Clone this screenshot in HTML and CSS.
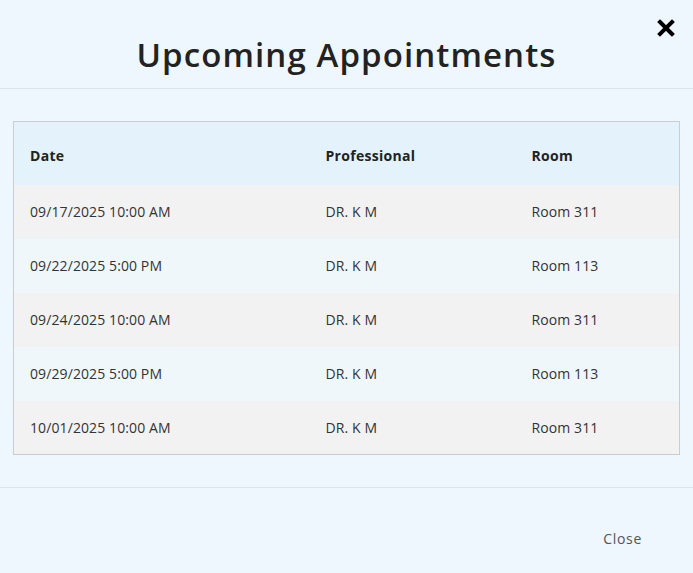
FILE: index.html
```html
<!DOCTYPE html>
<html>
<head>
<meta charset="utf-8">
<link rel="stylesheet" href="styles.css">
</head>
<body>
<div class="modal">
  <header class="modal-header">
    <h1 class="title">Upcoming Appointments</h1>
    <button class="close-x" aria-label="Close">
      <svg width="18" height="18" viewBox="0 0 18 18"><path d="M3 3 L15 15 M15 3 L3 15" stroke="#000" stroke-width="4" stroke-linecap="square"/></svg>
    </button>
  </header>
  <main class="modal-body">
    <table class="appts">
      <thead>
        <tr><th class="c-date">Date</th><th class="c-pro">Professional</th><th class="c-room">Room</th></tr>
      </thead>
      <tbody>
        <tr><td>09/17/2025 10:00 AM</td><td>DR. K M</td><td>Room 311</td></tr>
        <tr><td>09/22/2025 5:00 PM</td><td>DR. K M</td><td>Room 113</td></tr>
        <tr><td>09/24/2025 10:00 AM</td><td>DR. K M</td><td>Room 311</td></tr>
        <tr><td>09/29/2025 5:00 PM</td><td>DR. K M</td><td>Room 113</td></tr>
        <tr><td>10/01/2025 10:00 AM</td><td>DR. K M</td><td>Room 311</td></tr>
      </tbody>
    </table>
  </main>
  <footer class="modal-footer">
    <button class="close-btn">Close</button>
  </footer>
</div>
</body>
</html>
```
FILE: styles.css
```css
html, body {
  margin: 0;
  padding: 0;
  background: #eef6fe;
}
body {
  font-family: "Open Sans", "Noto Sans", sans-serif;
  color: #222;
  width: 693px;
  height: 573px;
  overflow: hidden;
}
.modal-header {
  position: relative;
  height: 88px;
  border-bottom: 1px solid #dde3ea;
  display: flex;
  align-items: center;
  justify-content: center;
}
.title {
  margin: 0;
  padding-top: 20px;
  font-size: 33px;
  font-weight: 600;
  letter-spacing: 1.1px;
  color: #222;
}
.close-x {
  position: absolute;
  top: 19px;
  right: 18px;
  background: none;
  border: 0;
  padding: 0;
  width: 18px;
  height: 18px;
  cursor: pointer;
}
.close-x svg { display: block; }
.modal-body {
  padding: 32px 13px 32px 13px;
  border-bottom: 1px solid #dde3ea;
}
.appts {
  width: 667px;
  border-collapse: collapse;
  border: 1px solid #c9cdd0;
  font-size: 14px;
  letter-spacing: 0.1px;
}
.appts th, .appts td {
  text-align: left;
  padding: 0 16px;
  box-sizing: border-box;
}
.appts th {
  height: 63px;
  padding-top: 4px;
  background: #e4f2fb;
  font-weight: 700;
  letter-spacing: 0.3px;
  color: #222;
}
.appts td {
  height: 54px;
  color: #333;
}
.c-date { width: 296px; }
.c-pro { width: 206px; }
.appts tbody tr:nth-child(odd) td { background: #f2f2f2; }
.appts tbody tr:nth-child(even) td { background: #eff7fb; }
.modal-footer {
  display: flex;
  justify-content: flex-end;
  padding: 41px 51px 0 0;
}
.close-btn {
  background: none;
  border: 0;
  padding: 0;
  font-family: "Open Sans", "Noto Sans", sans-serif;
  font-size: 14px;
  letter-spacing: 0.7px;
  color: #555;
  cursor: pointer;
}
```
